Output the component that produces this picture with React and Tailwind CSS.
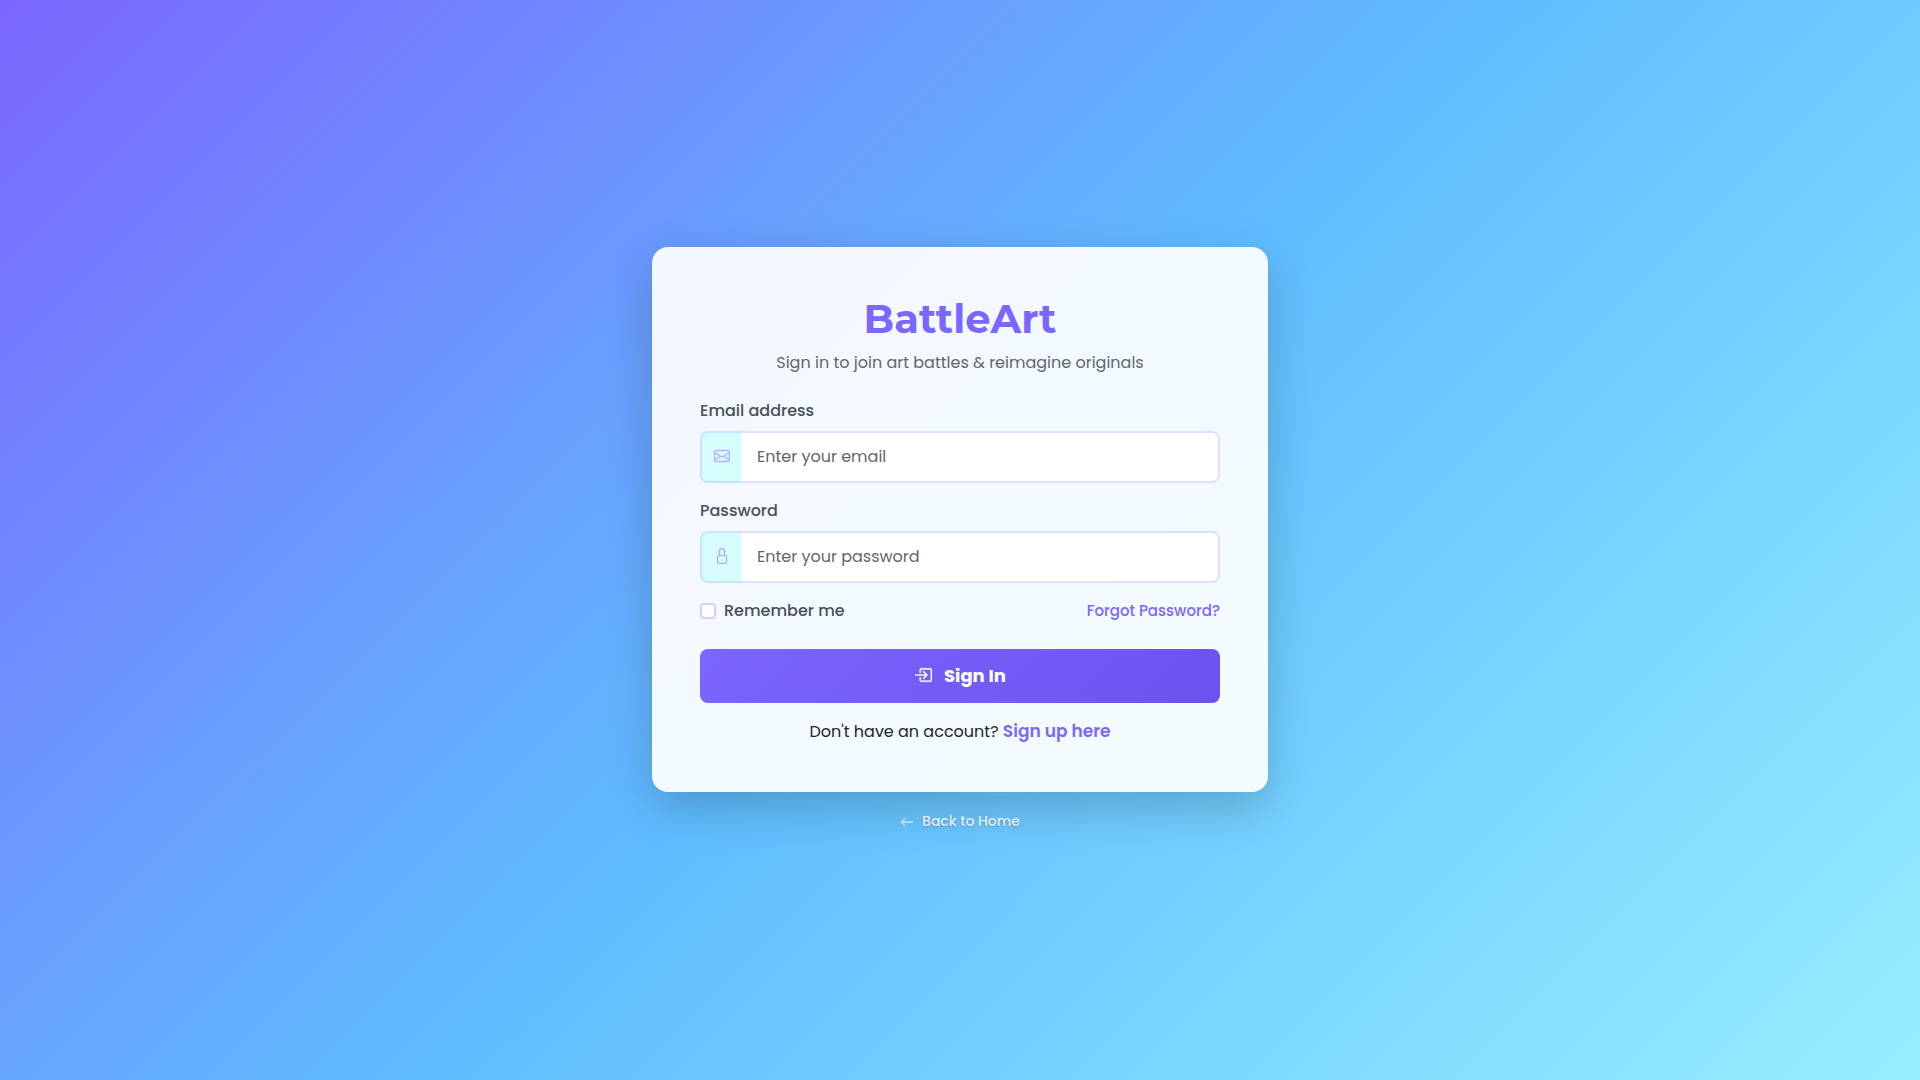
import React from "react";
import { BsEnvelope, BsLock, BsBoxArrowInRight, BsArrowLeft } from "react-icons/bs";

function Field({ id, label, type, placeholder, icon: Icon }) {
  return (
    <div className="mb-4">
      <label htmlFor={id} className="mb-2 block text-base font-medium text-[#495057]">
        {label}
      </label>
      <div className="flex h-[52px]">
        <span className="flex w-[41px] shrink-0 items-center justify-center rounded-l-lg border-2 border-r-0 border-[#c6e4ff] bg-[#d6fcfc] pb-0.5 text-[#b9a9ff]">
          <Icon aria-hidden="true" className="size-4" stroke="currentColor" strokeWidth="0.3" />
        </span>
        <input
          id={id}
          type={type}
          placeholder={placeholder}
          className="min-w-0 flex-1 rounded-r-lg border-2 border-l-0 border-[#dfe0ff] bg-white px-4 text-base text-[#212529] outline-none placeholder:text-[#62676c] focus:border-[#7b66ff]"
        />
      </div>
    </div>
  );
}

export default function App() {
  return (
    <main className="flex min-h-screen flex-col items-center justify-center bg-[linear-gradient(135deg,#7b66ff_0%,#5fbdff_50%,#96efff_100%)] px-3 font-['Poppins','Open_Sans',sans-serif]">
      <div className="w-full max-w-[616px]">
        <section className="rounded-2xl bg-white/92 p-12 shadow-[0_16px_48px_rgba(0,0,0,0.2)]">
          <header className="mb-6 text-center">
            <h1 className="mb-2 font-['Montserrat','Lato',sans-serif] text-[40px] leading-[48px] font-bold text-[#7b66ff]">
              BattleArt
            </h1>
            <p className="text-base text-[#62676c]">Sign in to join art battles &amp; reimagine originals</p>
          </header>
          <form onSubmit={(event) => event.preventDefault()}>
            <Field id="email" label="Email address" type="email" placeholder="Enter your email" icon={BsEnvelope} />
            <Field id="password" label="Password" type="password" placeholder="Enter your password" icon={BsLock} />
            <div className="mb-[26px] flex items-center justify-between">
              <label className="flex items-center gap-2 text-base font-medium text-[#495057]">
                <input
                  type="checkbox"
                  className="size-4 appearance-none rounded border-2 border-[#d7ceff] bg-white checked:bg-[#7b66ff]"
                />
                Remember me
              </label>
              <a href="#forgot" className="text-[15px] leading-6 font-medium text-[#7b66ff]">
                Forgot Password?
              </a>
            </div>
            <button
              type="submit"
              className="mb-4 flex h-[54px] w-full items-center justify-center gap-3 rounded-lg bg-[linear-gradient(135deg,#7b66ff,#6b52ee)] text-lg font-bold text-white"
            >
              <BsBoxArrowInRight aria-hidden="true" className="mb-0.5 size-[18px]" stroke="currentColor" strokeWidth="0.4" />
              Sign In
            </button>
          </form>
          <p className="text-center text-base leading-[25px] text-[#212529]">
            Don't have an account?{" "}
            <a href="#signup" className="text-[17px] font-semibold text-[#7b66ff]">
              Sign up here
            </a>
          </p>
        </section>
        <div className="mt-[18px] flex justify-center">
          <a
            href="#home"
            className="flex items-center gap-2 text-sm leading-[23px] font-medium text-[#e4edf5] [text-shadow:0_1px_2px_rgba(0,0,0,0.2)]"
          >
            <BsArrowLeft aria-hidden="true" className="size-3.5" stroke="currentColor" strokeWidth="0.3" />
            Back to Home
          </a>
        </div>
      </div>
    </main>
  );
}
